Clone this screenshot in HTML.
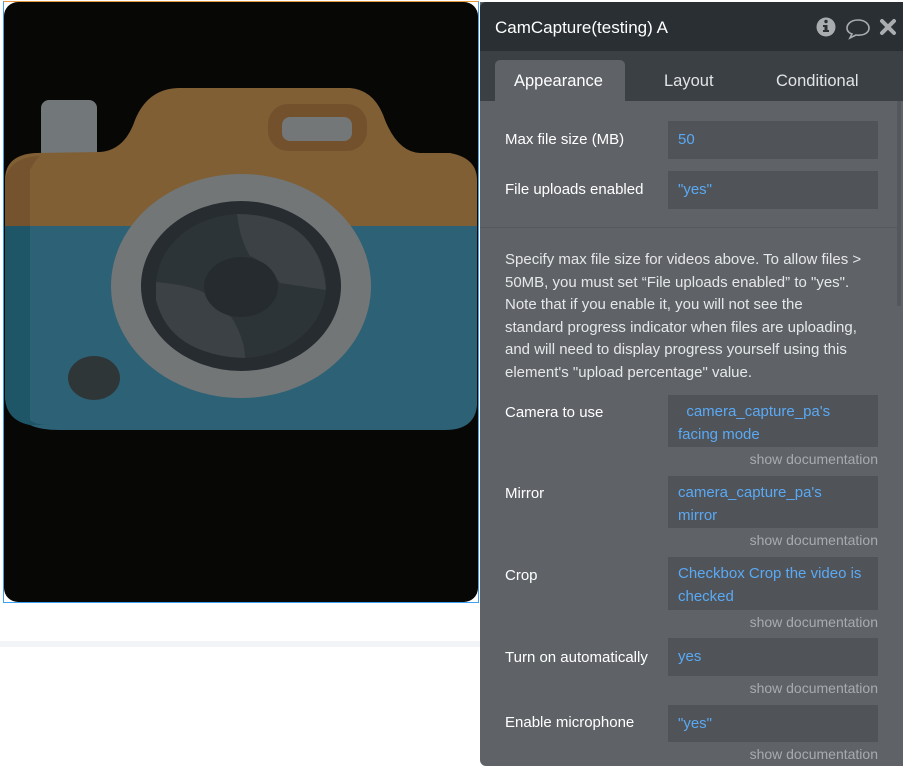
<!DOCTYPE html>
<html><head><meta charset="utf-8"><style>
*{margin:0;padding:0;box-sizing:border-box}
body{width:903px;height:768px;background:#fff;position:relative;overflow:hidden;font-family:"Liberation Sans",sans-serif}
.a{position:absolute}
.lbl{position:absolute;left:25px;color:#fff;font-size:15px;white-space:nowrap}
.fld{position:absolute;left:188px;width:210px;background:#505458;color:#5aa9f5;font-size:15px;padding:0 10px;line-height:22.6px;white-space:nowrap}
.ml{padding-top:6px}
.doc{position:absolute;right:25px;color:#a8abae;font-size:14px}
</style></head><body>
<div class="a" style="left:0;top:641px;width:480px;height:6px;background:#f3f4f7"></div>
<div class="a" style="left:3px;top:1px;width:476px;height:602px;border:1px solid #3ea0f0;border-top-color:#e89a3a"></div>
<svg class="a" style="left:4px;top:2px" width="474" height="600" viewBox="4 2 474 600">
<rect x="4" y="2" width="474" height="600" rx="14" fill="#070706"/>
<rect x="41" y="100" width="56" height="60" rx="8" fill="#72777a"/>
<path d="M100 152 Q125 150 135 120 Q148 88 180 88 L350 88 Q375 90 385 120 Q398 152 420 153 L450 153 Q477 158 477 180 L477 226 L5 226 L5 180 Q5 155 35 153 Z" fill="#805f35"/>
<path d="M5 226 L477 226 L477 405 Q475 430 445 430 L60 430 Q40 430 30 425 Q5 420 5 395 Z" fill="#2d6176"/>
<path d="M5 226 L30 226 L30 420 Q35 425 50 425 L30 425 Q5 420 5 395 Z" fill="#1e5567"/>
<path d="M5 226 L30 226 L30 170 Q35 160 40 156 Q10 157 5 180 Z" fill="#74532e"/>
<rect x="268" y="104" width="99" height="47" rx="20" fill="#74512d"/>
<rect x="282" y="117" width="70" height="24" rx="8" fill="#737778"/>
<ellipse cx="241" cy="286" rx="130" ry="112" fill="#727677"/>
<ellipse cx="241" cy="286" rx="100" ry="85" fill="#272c31"/>
<ellipse cx="241" cy="286" rx="85" ry="72" fill="#2d3438"/>
<path d="M237 214 Q320 215 326 290 L280 283 Q262 260 250 256 Q240 240 237 214Z" fill="#3b4145"/>
<path d="M156 282 Q190 285 205 293 Q225 312 232 318 Q245 340 245 358 Q170 355 156 300Z" fill="#3b4145"/>
<ellipse cx="241" cy="287" rx="37" ry="30" fill="#252b2e"/>
<ellipse cx="94" cy="378" rx="26" ry="22" fill="#2f3638"/>
</svg>
<div class="a" style="left:480px;top:2px;width:423px;height:764px;background:#5f6368;border-radius:0 0 0 6px"></div>
<div class="a" style="left:480px;top:2px;width:423px;height:49px;background:#2a2f33;border-radius:6px 0 0 0"></div>
<div class="a" style="left:495px;top:18px;color:#fff;font-size:17px">CamCapture(testing) A</div>
<svg class="a" style="left:815px;top:15px" width="88" height="26">
<circle cx="11" cy="12" r="9.5" fill="#a9adb0"/><rect x="9.5" y="10" width="3" height="7" fill="#2a2f33"/><rect x="8" y="15" width="6" height="2" fill="#2a2f33"/><rect x="8" y="10" width="4" height="2" fill="#2a2f33"/><circle cx="11" cy="6.5" r="1.7" fill="#2a2f33"/>
<path d="M43 5 C35 5 32 10 32 13 C32 16 34 18 37 19 L35 23 L41 20 C50 21 54 17 54 13 C54 9 50 5 43 5Z" fill="none" stroke="#a9adb0" stroke-width="1.6"/>
<path d="M67 6 L79 18 M79 6 L67 18" stroke="#a9adb0" stroke-width="4" stroke-linecap="round"/>
</svg>
<div class="a" style="left:480px;top:51px;width:423px;height:50px;background:#3b4045"></div>
<div class="a" style="left:495px;top:60px;width:130px;height:41px;background:#5f6368;border-radius:5px 5px 0 0"></div>
<div class="a" style="left:514px;top:72px;color:#fff;font-size:16.5px">Appearance</div>
<div class="a" style="left:664px;top:72px;color:#e2e3e4;font-size:16.5px">Layout</div>
<div class="a" style="left:776px;top:72px;color:#e2e3e4;font-size:16.5px">Conditional</div>
<div class="a" style="left:897px;top:101px;width:4px;height:205px;background:#54585c"></div>
<div class="a" style="left:480px;top:227px;width:417px;height:1px;background:#55595d"></div>
<div class="a" style="left:480px;top:0;width:423px;height:766px">
<div class="lbl" style="top:131px">Max file size (MB)</div>
<div class="fld" style="top:121px;height:38px;line-height:38px">50</div>
<div class="lbl" style="top:181px">File uploads enabled</div>
<div class="fld" style="top:171px;height:38px;line-height:38px">"yes"</div>
<div class="a" style="left:25px;top:249px;color:#e6e7e8;font-size:15px;line-height:22.6px;white-space:nowrap">Specify max file size for videos above. To allow files &gt;<br>50MB, you must set “File uploads enabled” to "yes".<br>Note that if you enable it, you will not see the<br>standard progress indicator when files are uploading,<br>and will need to display progress yourself using this<br>element's "upload percentage" value.</div>
<div class="lbl" style="top:404px">Camera to use</div>
<div class="fld ml" style="top:395px;height:52px">&nbsp;&nbsp;camera_capture_pa's<br>facing mode</div>
<div class="doc" style="top:451px">show documentation</div>
<div class="lbl" style="top:485px">Mirror</div>
<div class="fld ml" style="top:476px;height:52px">camera_capture_pa's<br>mirror</div>
<div class="doc" style="top:532px">show documentation</div>
<div class="lbl" style="top:567px">Crop</div>
<div class="fld ml" style="top:557px;height:53px">Checkbox Crop the video is<br>checked</div>
<div class="doc" style="top:614px">show documentation</div>
<div class="lbl" style="top:649px">Turn on automatically</div>
<div class="fld" style="top:638px;height:38px;line-height:38px">yes</div>
<div class="doc" style="top:680px">show documentation</div>
<div class="lbl" style="top:714px">Enable microphone</div>
<div class="fld" style="top:705px;height:37px;line-height:37px">"yes"</div>
<div class="doc" style="top:746px">show documentation</div>
</div>
</body></html>
